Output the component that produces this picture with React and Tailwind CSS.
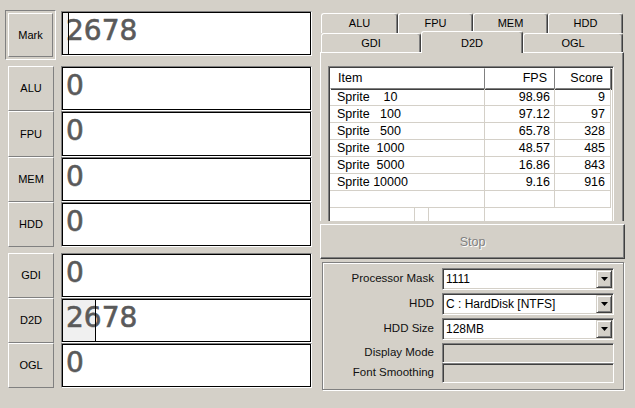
import React from "react";

const sunken2 =
  "border border-t-[#808080] border-l-[#808080] border-r-white border-b-white shadow-[inset_1px_1px_0_#404040,inset_-1px_-1px_0_#d4d0c8]";

function LeftBtn({ label }) {
  return (
    <div className="flex-1 flex items-center justify-center bg-[#d4d0c8] border border-t-white border-l-white border-r-[#808080] border-b-[#808080] text-[11px] text-black">
      {label}
    </div>
  );
}

function ScoreBox({ value, barW, lineL, cls }) {
  return (
    <div
      className={`relative bg-white border border-t-[#808080] border-l-[#808080] border-r-white border-b-white shadow-[inset_0_0_0_1px_#000] overflow-hidden ${cls || "flex-1"}`}
    >
      {barW && <div className={`absolute left-[1px] top-[1px] bottom-[1px] bg-[#f0f0f0] ${barW}`} />}
      <div className="relative pl-[4px] pt-[5px] font-['DejaVu_Sans',sans-serif] text-[28px] leading-[28px] text-[#5a5a5a] [-webkit-text-stroke:0.6px_#5a5a5a]">
        {value}
      </div>
      {lineL && <div className={`absolute top-[1px] bottom-[1px] w-[1px] bg-black ${lineL}`} />}
    </div>
  );
}

function Tab({ label, w, pt }) {
  return (
    <div
      className={`${w} h-full flex justify-center ${pt} bg-[#d4d0c8] border-t border-l border-r border-t-white border-l-white border-r-[#404040] shadow-[inset_-1px_0_0_#808080] rounded-t-[3px] text-[11px] leading-[13px] text-black`}
    >
      {label}
    </div>
  );
}

function Combo({ value }) {
  return (
    <div className={`w-[172px] h-[22px] bg-white ${sunken2} flex items-center`}>
      <div className="flex-1 pl-[3px] text-[12px] leading-[14px] text-black whitespace-pre">{value}</div>
      <div className="w-[16px] h-[18px] mr-[1px] bg-[#d4d0c8] border border-t-[#d4d0c8] border-l-[#d4d0c8] border-r-[#404040] border-b-[#404040] shadow-[inset_1px_1px_0_#fff,inset_-1px_-1px_0_#808080] flex items-center justify-center">
        <svg width="7" height="4" viewBox="0 0 7 4">
          <path d="M0 0H7L3.5 4Z" fill="#000" />
        </svg>
      </div>
    </div>
  );
}

const rows = [
  ["Sprite    10", "98.96", "9"],
  ["Sprite   100", "97.12", "97"],
  ["Sprite   500", "65.78", "328"],
  ["Sprite  1000", "48.57", "485"],
  ["Sprite  5000", "16.86", "843"],
  ["Sprite 10000", "9.16", "916"],
  ["", "", ""],
];

const headCell =
  "h-full flex items-center border border-t-white border-l-white border-r-[#808080] border-b-[#808080] shadow-[1px_1px_0_#404040] text-[12.5px] text-black";

export default function App() {
  return (
    <div className="flex w-[635px] h-[408px] bg-[#d4d0c8] font-['Liberation_Sans',Arial,sans-serif] overflow-hidden">
      {/* Left column */}
      <div className="w-[320px] flex flex-col">
        <div className="flex mt-[10px]">
          <div className="ml-[5px] w-[51px] h-[50px] border border-t-[#808080] border-l-[#808080] border-r-white border-b-white p-[2px] flex">
            <div className="flex-1 flex items-center justify-center border border-t-white border-l-white border-r-[#808080] border-b-[#808080] text-[11px] text-black">
              Mark
            </div>
          </div>
          <ScoreBox value="2678" cls="ml-[5px] mt-[1px] w-[251px] h-[45px]" barW="w-[5px]" lineL="left-[6px]" />
        </div>

        <div className="flex mt-[6px] h-[181px]">
          <div className="ml-[8px] w-[46px] flex flex-col">
            <LeftBtn label="ALU" />
            <LeftBtn label="FPU" />
            <LeftBtn label="MEM" />
            <LeftBtn label="HDD" />
          </div>
          <div className="ml-[7px] w-[251px] flex flex-col">
            <ScoreBox value="0" />
            <ScoreBox value="0" />
            <ScoreBox value="0" />
            <ScoreBox value="0" />
          </div>
        </div>

        <div className="flex mt-[6px] h-[135px]">
          <div className="ml-[8px] w-[46px] flex flex-col">
            <LeftBtn label="GDI" />
            <LeftBtn label="D2D" />
            <LeftBtn label="OGL" />
          </div>
          <div className="ml-[7px] w-[251px] flex flex-col">
            <ScoreBox value="0" />
            <ScoreBox value="2678" barW="w-[32px]" lineL="left-[33px]" />
            <ScoreBox value="0" />
          </div>
        </div>
      </div>

      {/* Right column */}
      <div className="w-[305px] flex flex-col pt-[13px]">
        <div className="flex h-[20px] pl-[1px]">
          <Tab label="ALU" w="w-[77px]" pt="pt-[3px]" />
          <Tab label="FPU" w="w-[75px]" pt="pt-[3px]" />
          <Tab label="MEM" w="w-[75px]" pt="pt-[3px]" />
          <Tab label="HDD" w="w-[75px]" pt="pt-[3px]" />
        </div>
        <div className="flex h-[19px] pl-[1px]">
          <Tab label="GDI" w="w-[100px]" pt="pt-[3px]" />
          <div className="relative z-10 w-[102px] h-[22px] -mt-[2px] flex justify-center pt-[5px] bg-[#d4d0c8] border-t border-l border-r border-t-white border-l-white border-r-[#404040] shadow-[inset_-1px_0_0_#808080] rounded-t-[3px] text-[11px] leading-[13px] text-black">
            D2D
          </div>
          <Tab label="OGL" w="w-[100px]" pt="pt-[3px]" />
        </div>

        <div className="relative w-[304px] h-[169px] border-t border-l border-r border-t-white border-l-white border-r-[#404040] shadow-[inset_-1px_0_0_#808080] pt-[13px] pl-[7px] overflow-hidden">
          <div className={`w-[286px] h-[160px] bg-white ${sunken2} p-[1px] flex flex-col`}>
            <div className="flex h-[21px] shrink-0">
              <div className={`w-[155px] pl-[7px] ${headCell}`}>Item</div>
              <div className={`w-[70px] justify-end pr-[7px] ${headCell}`}>FPS</div>
              <div className={`w-[56px] justify-end pr-[7px] ${headCell}`}>Score</div>
            </div>
            {rows.map((r, i) => (
              <div key={i} className="flex h-[17px] shrink-0 text-[12.5px] leading-[15px] text-black">
                <div className="w-[155px] pl-[7px] pt-[1px] flex items-center whitespace-pre border-r border-b border-[#d4d0c8]">{r[0]}</div>
                <div className="w-[70px] pr-[4px] pt-[1px] flex items-center justify-end border-r border-b border-[#d4d0c8]">{r[1]}</div>
                <div className="w-[56px] pr-[5px] pt-[1px] flex items-center justify-end border-r border-b border-[#d4d0c8]">{r[2]}</div>
              </div>
            ))}
            <div className="flex h-[17px] shrink-0">
              <div className="w-[85px] border-r border-[#d4d0c8]" />
              <div className="w-[14px] border-r border-[#d4d0c8]" />
              <div className="w-[56px] border-r border-[#d4d0c8]" />
            </div>
          </div>
        </div>

        <div className="mt-[3px] w-[305px] h-[35px] bg-[#d4d0c8] border border-t-white border-l-white border-r-[#404040] border-b-[#404040] shadow-[inset_-1px_-1px_0_#808080] flex items-center justify-center pt-[1px] text-[12.5px] text-[#808080] [text-shadow:1px_1px_0_#fff]">
          Stop
        </div>

        <div className="mt-[3px] ml-[2px] w-[302px] h-[128px] border border-[#808080] shadow-[inset_1px_1px_0_#fff,1px_1px_0_#fff] pt-[5px] flex flex-col">
          {[
            ["Processor Mask", "1111"],
            ["HDD", "C : HardDisk [NTFS]"],
            ["HDD Size", "128MB"],
          ].map(([l, v], i) => (
            <div key={i} className={`flex items-center ${i ? "mt-[3px]" : ""}`}>
              <div className="w-[111px] text-right text-[11.5px] text-[#111]">{l}</div>
              <div className="ml-[8px]">
                <Combo value={v} />
              </div>
            </div>
          ))}
          <div className="flex items-center mt-[3px]">
            <div className="w-[111px] text-right text-[11.5px] text-[#111]">Display Mode</div>
            <div className={`ml-[8px] w-[172px] h-[20px] bg-[#d4d0c8] ${sunken2}`} />
          </div>
          <div className="flex items-center">
            <div className="w-[111px] text-right text-[11.5px] text-[#111]">Font Smoothing</div>
            <div className={`ml-[8px] w-[172px] h-[20px] bg-[#d4d0c8] ${sunken2}`} />
          </div>
        </div>
      </div>
    </div>
  );
}
